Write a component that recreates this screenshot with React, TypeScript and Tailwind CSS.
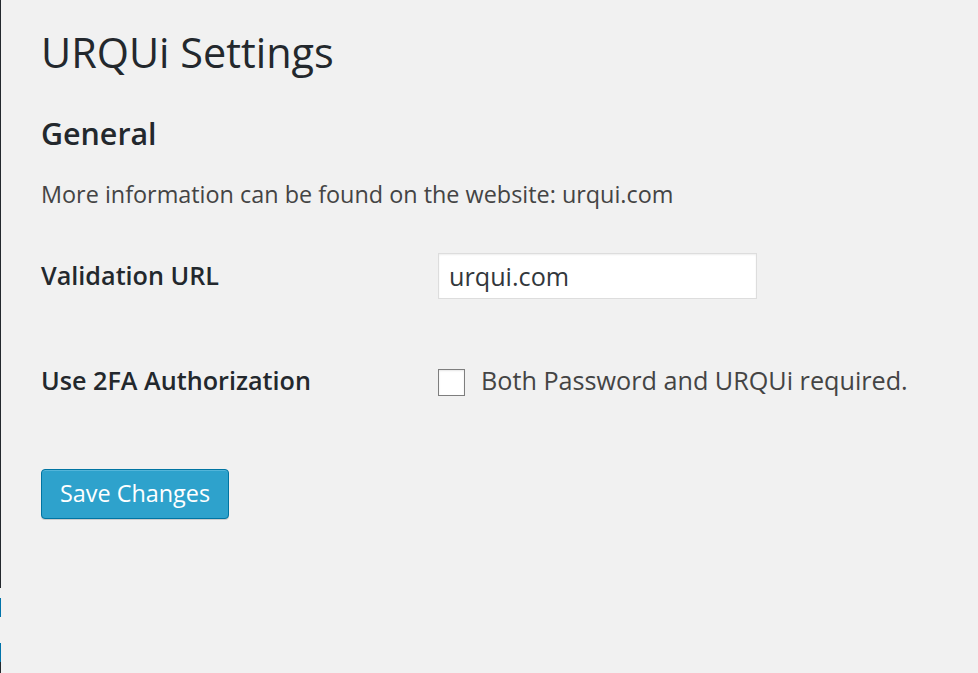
export default function App() {
  return (
    <div
      className="flex min-h-[673px] w-full bg-[#f1f1f1] text-[#444]"
      style={{ fontFamily: '"Open Sans", sans-serif' }}
    >
      {/* admin menu edge */}
      <div className="flex w-px shrink-0 flex-col">
        <div className="h-[588px] bg-[#23282d]" />
        <div className="h-[10px]" />
        <div className="h-[19px] bg-[#0073aa]" />
        <div className="h-[26px]" />
        <div className="h-[19px] bg-[#0073aa]" />
        <div className="flex-1 bg-[#23282d]" />
      </div>

      <div className="flex-1 pl-[40px] pt-[24px]">
        <h1 className="text-[41.4px] leading-[56px] font-normal text-[#23282d]">URQUi Settings</h1>

        <h2 className="mt-[34px] text-[30.4px] leading-[40px] font-semibold text-[#23282d]">General</h2>

        <p className="mt-[24px] text-[23.4px] leading-[32px] text-[#444]">
          More information can be found on the website: urqui.com
        </p>

        <div className="mt-[43px] flex items-center">
          <div className="w-[397px] text-[25.2px] font-semibold text-[#23282d]">Validation URL</div>
          <input
            type="text"
            defaultValue="urqui.com"
            className="h-[46px] w-[319px] border border-[#ddd] bg-white px-[10px] text-[25.2px] text-[#32373c] shadow-[inset_0_1px_2px_rgba(0,0,0,0.07)] outline-none"
          />
        </div>

        <div className="mt-[65px] flex items-center">
          <div className="w-[397px] -translate-y-[2px] text-[25.2px] font-semibold text-[#23282d]">
            Use 2FA Authorization
          </div>
          <label className="flex items-center gap-[16px] text-[25.2px] text-[#444]">
            <span className="h-[27px] w-[27px] border border-[#7e7e7e] bg-white shadow-[inset_0_1px_2px_rgba(0,0,0,0.1)]" />
            <span className="-translate-y-[2px]">Both Password and URQUi required.</span>
          </label>
        </div>

        <button
          type="button"
          className="mt-[67px] h-[50px] w-[188px] rounded-[4px] border border-[#0074a2] bg-[#2ea2cc] text-[23.4px] text-white shadow-[inset_0_1px_0_rgba(120,200,230,0.5),0_1px_0_rgba(0,0,0,0.15)]"
        >
          Save Changes
        </button>
      </div>
    </div>
  )
}
